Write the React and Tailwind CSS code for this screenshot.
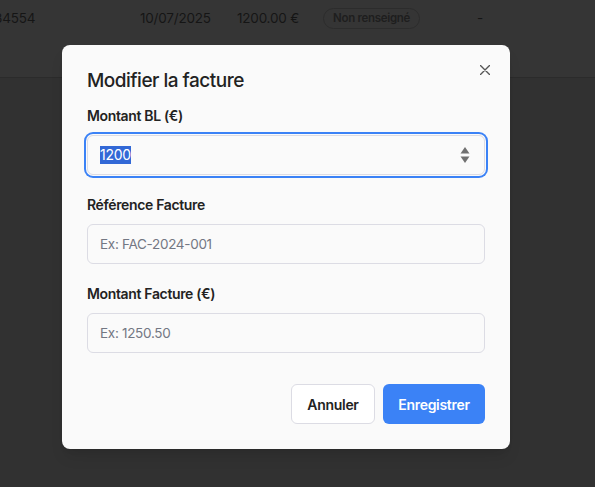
import React from 'react';

const font = { fontFamily: '"Segoe UI", Inter, "Noto Sans", sans-serif' };

function Field({ label, children }) {
  return (
    <div className="flex flex-col">
      <label className="text-[14px] leading-5 font-semibold tracking-[-0.35px] text-[#222] mb-[9px]">{label}</label>
      {children}
    </div>
  );
}

const inputCls =
  'h-10 rounded-md border border-[#dcdce4] bg-[#fafafa] px-3 text-[13.5px] tracking-[-0.3px] text-[#222] placeholder-[#737783] outline-none';

export default function App() {
  return (
    <div className="relative h-[487px] w-[595px] overflow-hidden bg-[#313131]" style={font}>
      {/* table row behind overlay */}
      <div className="flex h-[78px] border-b border-[#2b2b2b] bg-[#353535] pt-[7px] text-[13.5px] tracking-[-0.2px] text-[#151515]">
        <div className="w-[146px] -ml-[6px] pt-[1px]">34554</div>
        <div className="w-[97px] pt-[1px]">10/07/2025</div>
        <div className="w-[86px] pt-[1px]">1200.00 €</div>
        <div className="w-[154px]">
          <span className="inline-flex h-[21px] items-center rounded-full border border-[#2c2c2c] px-[9px] text-[11.5px] font-semibold tracking-[-0.3px] text-[#1e1e1e]">
            Non renseigné
          </span>
        </div>
        <div className="pt-[1px]">-</div>
      </div>

      {/* modal */}
      <div className="absolute left-[62px] top-[45px] w-[448px] rounded-lg bg-[#fafafa] px-[25px] pt-[22px] pb-[25px] shadow-lg">
        <button className="absolute right-[20px] top-[20px] flex h-[10px] w-[10px] items-center justify-center text-[#555]">
          <svg width="10" height="10" viewBox="0 0 10 10" fill="none" stroke="currentColor" strokeWidth="1.4" strokeLinecap="round">
            <path d="M0.5 0.5 L9.5 9.5 M9.5 0.5 L0.5 9.5" />
          </svg>
        </button>
        <h2 className="text-[19px] leading-7 font-medium tracking-[-0.5px] text-[#222] mb-[11px]">Modifier la facture</h2>

        <div className="flex flex-col gap-5">
          <Field label="Montant BL (€)">
            <div className="relative flex h-10 items-center rounded-md border border-[#dcdce4] bg-[#fafafa] px-3 text-[14px] tracking-[-0.3px] shadow-[0_0_0_1px_#fafafa,0_0_0_3px_#3b82f6]">
              <span className="bg-[#3268d6] text-white leading-[18px]">1200</span>
              <svg className="absolute right-[14px] top-1/2 -translate-y-1/2" width="10" height="18" viewBox="0 0 10 18" fill="#707070">
                <path d="M5 1 L9.5 7.5 L0.5 7.5 Z" />
                <path d="M5 17 L9.5 10.5 L0.5 10.5 Z" />
              </svg>
            </div>
          </Field>
          <Field label="Référence Facture">
            <input type="text" placeholder="Ex: FAC-2024-001" className={inputCls} />
          </Field>
          <Field label="Montant Facture (€)">
            <input type="text" placeholder="Ex: 1250.50" className={inputCls} />
          </Field>
        </div>

        <div className="mt-[31px] flex justify-end gap-2">
          <button className="h-10 w-[84px] rounded-md border border-[#dcdce4] bg-white text-[14px] font-semibold tracking-[-0.3px] text-[#222]">
            Annuler
          </button>
          <button className="h-10 w-[102px] rounded-md bg-[#3b82f6] text-[14px] font-semibold tracking-[-0.3px] text-white">
            Enregistrer
          </button>
        </div>
      </div>
    </div>
  );
}
